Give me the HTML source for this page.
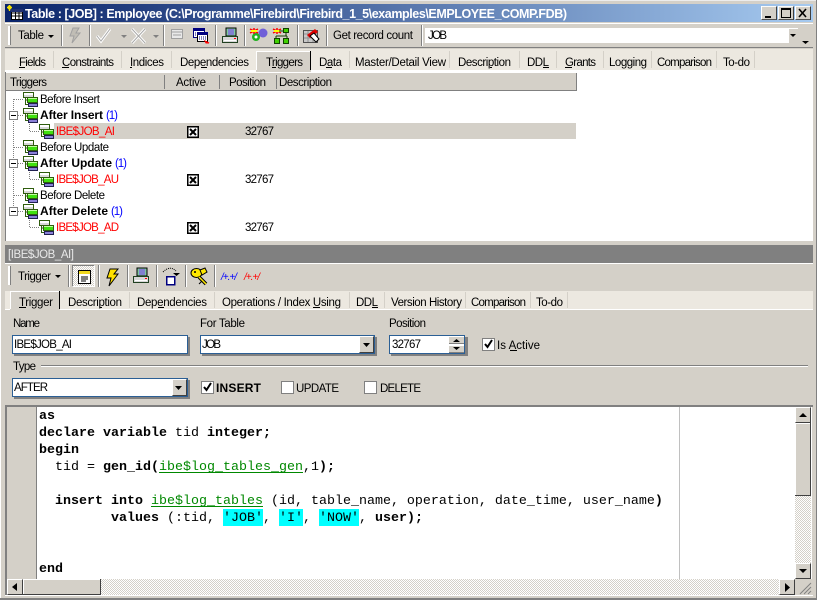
<!DOCTYPE html>
<html><head><meta charset="utf-8"><title>Table : [JOB] : Employee</title>
<style>
html,body{margin:0;padding:0;background:#d4d0c8;overflow:hidden}
svg{display:block}
text{font-family:"Liberation Sans",sans-serif;font-size:11.5px;fill:#000;white-space:pre}
.b{font-weight:bold;font-size:12px}
.r{fill:#f00}
.u{fill:#00f}
.c{font-family:"Liberation Mono",monospace;font-size:13.33px}
.c tspan.k{font-weight:bold}
rect,line{shape-rendering:crispEdges}
</style></head><body>
<svg width="817" height="600" viewBox="0 0 817 600" xmlns="http://www.w3.org/2000/svg">
<defs>
<linearGradient id="tb" x1="0" x2="1" y1="0" y2="0"><stop offset="0" stop-color="#0a246a"/><stop offset="1" stop-color="#a6caf0"/></linearGradient>
<pattern id="dit" width="2" height="2" patternUnits="userSpaceOnUse"><rect width="2" height="2" fill="#fff"/><rect width="1" height="1" fill="#d4d0c8"/><rect x="1" y="1" width="1" height="1" fill="#d4d0c8"/></pattern>
<g id="ti"><rect x="0.5" y="-6.5" width="10" height="5" fill="#d8d8d8" stroke="#2f5d0e"/><rect x="1" y="-6" width="9" height="2" fill="#fff"/><path d="M2.500-1.500V5.500H5" fill="none" stroke="#2f5d0e"/><path d="M2.500 1H4" stroke="#2f5d0e"/><rect x="4.500" y="-1.500" width="10" height="5" fill="#40e010" stroke="#2f5d0e"/><rect x="5" y="-1" width="9" height="1" fill="#c0ffa0"/><rect x="5.500" y="4.500" width="9" height="3" fill="#8a80d8" stroke="#20204f"/></g>
<g id="chk"><rect x="0.5" y="0.5" width="11" height="11" fill="#fff" stroke="#000" stroke-width="1"/><rect x="1" y="1" width="10" height="10" fill="none" stroke="#000"/><path d="M3 3L9 9M9 3L3 9" stroke="#000" stroke-width="2"/></g>
<g id="mn"><rect x="0.5" y="0.5" width="8" height="8" fill="#fff" stroke="#808080"/><rect x="2" y="4" width="5" height="1" fill="#000"/></g>
<g id="cb"><rect width="16" height="16" fill="#d4d0c8"/><path d="M0.5 15.500V.5H15.500" fill="none" stroke="#fff"/><path d="M.5 15.500H15.500V.5" fill="none" stroke="#404040"/></g>
</defs>

<!-- window -->
<rect width="817" height="600" fill="#d4d0c8"/>
<rect x="0" y="0" width="817" height="1" fill="#ececec"/>
<rect x="0" y="0" width="1" height="600" fill="#fff"/>
<rect x="816" y="0" width="1" height="600" fill="#808080"/>
<rect x="0" y="598" width="817" height="2" fill="#808080"/>
<!-- title -->
<rect x="5" y="4" width="808" height="18" fill="url(#tb)"/>
<g>
<rect x="11.500" y="9.500" width="11" height="10" fill="#fff" stroke="#000"/><path d="M12 13H22M12 16H22M15.500 10V19M19 10V19" stroke="#000"/>
<rect x="11" y="9" width="12" height="3" fill="#203070"/>
<path d="M8 6L11 9M11 6L8 9M7 7.500H12M9.500 5V11" stroke="#f0e000" stroke-width="1.300"/>
</g>
<text class="b" x="25" y="18" style="font-size:12.5px;fill:#fff" textLength="542">Table : [JOB] : Employee (C:\Programme\Firebird\Firebird_1_5\examples\EMPLOYEE_COMP.FDB)</text>
<g transform="translate(761,6)"><use href="#cb" transform="scale(1,.875)"/><rect x="4" y="10" width="6" height="2" fill="#000"/></g>
<g transform="translate(778,6)"><use href="#cb" transform="scale(1,.875)"/><rect x="3.500" y="2.500" width="9" height="9" fill="none" stroke="#000"/><rect x="3" y="2" width="10" height="2" fill="#000"/></g>
<g transform="translate(795,6)"><use href="#cb" transform="scale(1,.875)"/><path d="M4 3L11 11M11 3L4 11" stroke="#000" stroke-width="1.600"/></g>

<!-- toolbar 1 -->
<rect x="5" y="23" width="808" height="1" fill="#fff"/>
<rect x="5" y="47" width="808" height="1" fill="#808080"/>
<rect x="8" y="26" width="2" height="19" fill="#fff"/><rect x="10" y="26" width="1" height="19" fill="#808080"/>
<text x="18" y="39" textLength="26">Table</text><path d="M48 35h6l-3 3z" fill="#000"/>
<g fill="#808080">
<rect x="61" y="25" width="1" height="21"/><rect x="89" y="25" width="1" height="21"/><rect x="163" y="25" width="1" height="21"/><rect x="215" y="25" width="1" height="21"/><rect x="244" y="25" width="1" height="21"/><rect x="297" y="25" width="1" height="21"/><rect x="326" y="25" width="1" height="21"/><rect x="421" y="25" width="1" height="21"/>
</g>
<g fill="#fff">
<rect x="62" y="25" width="1" height="21"/><rect x="90" y="25" width="1" height="21"/><rect x="164" y="25" width="1" height="21"/><rect x="216" y="25" width="1" height="21"/><rect x="245" y="25" width="1" height="21"/><rect x="298" y="25" width="1" height="21"/><rect x="327" y="25" width="1" height="21"/><rect x="422" y="25" width="1" height="21"/>
</g>
<!-- disabled icons -->
<path d="M73 28L79 28L76 33L80 33L72 43L74 36L70 36Z" fill="#c0bdb5" stroke="#a0a0a0"/>
<path d="M97 36L101 41L110 29" fill="none" stroke="#fff" stroke-width="3"/><path d="M97 36L101 41L110 29" fill="none" stroke="#a8a8a8" stroke-width="1"/>
<path d="M121 35h6l-3 3z" fill="#808080"/>
<path d="M132 29L145 43M145 29L132 43" stroke="#fff" stroke-width="3"/><path d="M132 29L145 43M145 29L132 43" stroke="#a8a8a8"/>
<path d="M153 35h6l-3 3z" fill="#808080"/>
<rect x="171.500" y="29.500" width="11" height="9" fill="#e8e8e8" stroke="#a0a0a0"/><path d="M171 32H183M173 35H181" stroke="#a0a0a0"/>
<!-- calendar icon -->
<rect x="193.500" y="28.500" width="11" height="9" fill="#fff" stroke="#000080"/><rect x="193" y="28" width="12" height="3" fill="#000080"/><path d="M195 33H199M195 35H197" stroke="#000080" stroke-dasharray="1 1"/>
<rect x="197.500" y="32.500" width="10" height="9" fill="#fff" stroke="#000"/><rect x="197" y="32" width="11" height="3" fill="#000080"/><path d="M199 37H206M199 39H206" stroke="#000080" stroke-dasharray="1 1"/>
<path d="M205 41l4 2l-3 0z" fill="#f00" stroke="#f00"/>
<!-- printer -->
<rect x="226" y="28" width="10" height="8" fill="#7fc8a0" stroke="#000"/><rect x="228" y="29" width="6" height="6" fill="#8080d0"/>
<rect x="222.500" y="36.500" width="15" height="6" fill="#d8d8d8" stroke="#204020"/><rect x="224" y="40" width="12" height="1" fill="#fff"/><rect x="234" y="38" width="2" height="1" fill="#f00"/>
<!-- gears -->
<circle cx="263" cy="33" r="4.500" fill="#7060d8"/><circle cx="256" cy="37" r="4" fill="#20b020"/><circle cx="256" cy="37" r="1.500" fill="#fff"/>
<path d="M250 29L258 33M258 29L250 33M254 28V34" stroke="#f00" stroke-width="1.500"/><path d="M251 31H257" stroke="#ff0" stroke-width="2"/>
<path d="M273 29L281 33M281 29L273 33M277 28V34" stroke="#f00" stroke-width="1.500"/><path d="M274 31H280" stroke="#ff0" stroke-width="2"/>
<rect x="283.500" y="28.500" width="5" height="4" fill="#40d000" stroke="#104000"/><path d="M279 31H283M286 33V36M276 36H287M276 36V38M287 36V38" fill="none" stroke="#104000"/>
<rect x="274.500" y="38.500" width="5" height="5" fill="#40d000" stroke="#104000"/><rect x="283.500" y="38.500" width="5" height="5" fill="#40d000" stroke="#104000"/>
<!-- eraser icon -->
<rect x="303.500" y="30.500" width="14" height="12" fill="#c8c8c8" stroke="#505050"/><path d="M304 34H317M304 38H317M308 31V42M313 31V42" stroke="#909090"/>
<path d="M307 35L315 29L318 32L310 38Z" fill="#e00000"/><path d="M310 36L316 42L319 39L314 33Z" fill="#fff" stroke="#000"/>
<text x="333" y="39" textLength="80">Get record count</text>
<rect x="425" y="28" width="373" height="15" fill="#fff"/>
<text x="428" y="39" textLength="19">JOB</text>
<rect x="788" y="28" width="10" height="15" fill="#d4d0c8"/><rect x="788" y="28" width="10" height="1" fill="#fff"/><rect x="788" y="28" width="1" height="15" fill="#fff"/>
<path d="M790 34h6l-3 3z" fill="#000"/><path d="M802 41h7l-3.500 3z" fill="#000"/>

<!-- tabs 1 -->
<rect x="5" y="48" width="808" height="24" fill="#ece8e0"/>
<rect x="5" y="48" width="808" height="1" fill="#d4d0c8"/>
<rect x="5" y="70" width="808" height="2" fill="#fff"/>
<rect x="256" y="51" width="55" height="21" fill="#d4d0c8"/>
<rect x="256" y="51" width="55" height="1" fill="#fff"/><rect x="256" y="51" width="1" height="19" fill="#fff"/><rect x="310" y="51" width="1" height="19" fill="#000"/>
<g fill="#d4d0c8">
<rect x="53" y="51" width="1" height="17"/><rect x="121" y="51" width="1" height="17"/><rect x="171" y="51" width="1" height="17"/><rect x="349" y="51" width="1" height="17"/><rect x="449" y="51" width="1" height="17"/><rect x="519" y="51" width="1" height="17"/><rect x="556" y="51" width="1" height="17"/><rect x="603" y="51" width="1" height="17"/><rect x="651" y="51" width="1" height="17"/><rect x="716" y="51" width="1" height="17"/><rect x="754" y="51" width="1" height="17"/>
</g>
<text x="19" y="66" textLength="27">Fields</text><rect x="19" y="67" width="6" height="1"/>
<text x="62" y="66" textLength="52">Constraints</text><rect x="62" y="67" width="7" height="1"/>
<text x="130" y="66" textLength="34">Indices</text><rect x="130" y="67" width="2" height="1"/>
<text x="180" y="66" textLength="69">Dependencies</text><rect x="201" y="67" width="6" height="1"/>
<text x="266" y="66" textLength="37">Triggers</text><rect x="272" y="67" width="4" height="1"/>
<text x="319" y="66" textLength="23">Data</text><rect x="326" y="67" width="6" height="1"/>
<text x="355" y="66" textLength="91">Master/Detail View</text>
<text x="458" y="66" textLength="53">Description</text><rect x="490" y="67" width="2" height="1"/>
<text x="527" y="66" textLength="22">DDL</text><rect x="543" y="67" width="6" height="1"/>
<text x="565" y="66" textLength="31">Grants</text><rect x="565" y="67" width="7" height="1"/>
<text x="609" y="66" textLength="38">Logging</text>
<text x="657" y="66" textLength="55">Comparison</text>
<text x="723" y="66" textLength="27">To-do</text>

<!-- tree -->
<rect x="5" y="72" width="808" height="169" fill="#fff"/>
<rect x="5" y="72" width="1" height="169" fill="#808080"/>
<rect x="6" y="73" width="570" height="17" fill="#d4d0c8"/>
<rect x="6" y="90" width="571" height="1" fill="#808080"/><rect x="576" y="73" width="1" height="18" fill="#808080"/>
<rect x="164" y="75" width="1" height="14" fill="#808080"/><rect x="219" y="75" width="1" height="14" fill="#808080"/><rect x="276" y="75" width="1" height="14" fill="#808080"/>
<text x="10" y="86" textLength="37">Triggers</text>
<text x="176" y="86" textLength="30">Active</text>
<text x="229" y="86" textLength="37">Position</text>
<text x="279" y="86" textLength="53">Description</text>
<rect x="54" y="123" width="522" height="16" fill="#d4d0c8"/>
<path d="M13.500 99V211" stroke="#808080" stroke-dasharray="1 1"/>
<g stroke="#808080" stroke-dasharray="1 1" fill="none">
<path d="M14 99.500H23M14 115.500H23M14 147.500H23M14 163.500H23M14 195.500H23M14 211.500H23"/>
<path d="M29.500 122V131.500H39M29.500 170V179.500H39M29.500 218V227.500H39"/>
</g>
<use href="#mn" x="9" y="111"/><use href="#mn" x="9" y="159"/><use href="#mn" x="9" y="207"/>
<use href="#ti" x="23" y="99"/><use href="#ti" x="23" y="115"/><use href="#ti" x="39" y="131"/>
<use href="#ti" x="23" y="147"/><use href="#ti" x="23" y="163"/><use href="#ti" x="39" y="179"/>
<use href="#ti" x="23" y="195"/><use href="#ti" x="23" y="211"/><use href="#ti" x="39" y="227"/>
<text x="40" y="103" textLength="60">Before Insert</text>
<text class="b" x="40" y="119" textLength="63">After Insert</text><text class="u" x="106" y="119" textLength="12">(1)</text>
<text class="r" x="56" y="135" textLength="59">IBE$JOB_AI</text>
<text x="40" y="151" textLength="69">Before Update</text>
<text class="b" x="40" y="167" textLength="72">After Update</text><text class="u" x="115" y="167" textLength="12">(1)</text>
<text class="r" x="56" y="183" textLength="63">IBE$JOB_AU</text>
<text x="40" y="199" textLength="65">Before Delete</text>
<text class="b" x="40" y="215" textLength="68">After Delete</text><text class="u" x="111" y="215" textLength="12">(1)</text>
<text class="r" x="56" y="231" textLength="63">IBE$JOB_AD</text>
<use href="#chk" x="187" y="126"/><use href="#chk" x="187" y="174"/><use href="#chk" x="187" y="222"/>
<text x="245" y="135" textLength="29">32767</text><text x="245" y="183" textLength="29">32767</text><text x="245" y="231" textLength="29">32767</text>

<!-- panel header -->
<rect x="5" y="245" width="808" height="18" fill="#808080"/>
<text x="8" y="258" style="fill:#e8e8e8" textLength="66">[IBE$JOB_AI]</text>

<!-- toolbar 2 -->
<rect x="5" y="263" width="808" height="1" fill="#fff"/>
<rect x="8" y="266" width="2" height="19" fill="#fff"/><rect x="10" y="266" width="1" height="19" fill="#808080"/>
<text x="18" y="280" textLength="33">Trigger</text><path d="M55 275h6l-3 3z" fill="#000"/>
<g fill="#808080"><rect x="68" y="265" width="1" height="22"/><rect x="98" y="265" width="1" height="22"/><rect x="127" y="265" width="1" height="22"/><rect x="156" y="265" width="1" height="22"/><rect x="185" y="265" width="1" height="22"/><rect x="214" y="265" width="1" height="22"/></g>
<g fill="#fff"><rect x="69" y="265" width="1" height="22"/><rect x="99" y="265" width="1" height="22"/><rect x="128" y="265" width="1" height="22"/><rect x="157" y="265" width="1" height="22"/><rect x="186" y="265" width="1" height="22"/><rect x="215" y="265" width="1" height="22"/></g>
<!-- pressed button -->
<rect x="72" y="265" width="23" height="22" fill="url(#dit)"/><path d="M72.500 286.500V265.500H94.500" fill="none" stroke="#808080"/><path d="M72.500 286.500H94.500V265.500" fill="none" stroke="#fff"/>
<rect x="78.500" y="270.500" width="12" height="13" fill="#fff" stroke="#000"/><rect x="79" y="271" width="11" height="3" fill="#f0d820"/><path d="M81 277H88M81 279H88M81 281H86" stroke="#000"/>
<!-- lightning -->
<path d="M110 269L118 269L114 274L118 274L109 286L111 278L107 278Z" fill="#ffe000" stroke="#000"/>
<!-- printer 2 -->
<rect x="137" y="268" width="10" height="8" fill="#7fc8a0" stroke="#000"/><rect x="139" y="269" width="6" height="6" fill="#8080d0"/>
<rect x="133.500" y="276.500" width="15" height="6" fill="#d8d8d8" stroke="#204020"/><rect x="135" y="280" width="12" height="1" fill="#fff"/><rect x="145" y="278" width="2" height="1" fill="#f00"/>
<!-- step icon -->
<path d="M163 272Q170 265 176 271" fill="none" stroke="#000" stroke-dasharray="1 1"/><path d="M173 273h7l-3.500 3z" fill="#000"/>
<rect x="166.500" y="276.500" width="8" height="8" fill="#fff" stroke="#000080" stroke-width="1.500"/>
<!-- key icon -->
<ellipse cx="196.500" cy="273" rx="5.500" ry="4.500" fill="#ffe800" stroke="#000"/><circle cx="195" cy="272" r="1" fill="#000"/>
<path d="M200 270L205 268L207 272L202 275Z" fill="#ffe800" stroke="#000"/>
<path d="M199 277L206 284" stroke="#000" stroke-width="3.500"/><path d="M199 277L206 284" stroke="#ffe800" stroke-width="1.500"/><path d="M202 281L199 284" stroke="#000"/>
<text x="221" y="280" style="font-size:10px;font-style:italic;fill:#00f" textLength="16">/+.+/</text>
<text x="244" y="280" style="font-size:10px;font-style:italic;fill:#f00" textLength="16">/+.+/</text>

<!-- tabs 2 -->
<rect x="5" y="291" width="808" height="19" fill="#ece8e0"/>
<rect x="5" y="309" width="808" height="1" fill="#fff"/>
<rect x="10" y="291" width="50" height="19" fill="#d4d0c8"/>
<rect x="10" y="291" width="50" height="1" fill="#fff"/><rect x="10" y="291" width="1" height="18" fill="#fff"/><rect x="59" y="291" width="1" height="18" fill="#000"/>
<g fill="#d4d0c8"><rect x="129" y="292" width="1" height="16"/><rect x="214" y="292" width="1" height="16"/><rect x="349" y="292" width="1" height="16"/><rect x="384" y="292" width="1" height="16"/><rect x="465" y="292" width="1" height="16"/><rect x="530" y="292" width="1" height="16"/><rect x="567" y="292" width="1" height="16"/></g>
<text x="19" y="306" textLength="34">Trigger</text><rect x="19" y="307" width="7" height="1"/>
<text x="68" y="306" textLength="54">Description</text><rect x="100" y="307" width="2" height="1"/>
<text x="137" y="306" textLength="70">Dependencies</text><rect x="158" y="307" width="6" height="1"/>
<text x="222" y="306" textLength="119">Operations / Index Using</text><rect x="313" y="307" width="7" height="1"/>
<text x="356" y="306" textLength="22">DDL</text><rect x="372" y="307" width="6" height="1"/>
<text x="391" y="306" textLength="71">Version History</text>
<text x="471" y="306" textLength="55">Comparison</text>
<text x="536" y="306" textLength="27">To-do</text>

<!-- form -->
<text x="13" y="327" textLength="27">Name</text>
<text x="200" y="327" textLength="45">For Table</text>
<text x="389" y="327" textLength="37">Position</text>
<rect x="14" y="337" width="176" height="19" fill="#808080"/>
<rect x="12.500" y="335.500" width="175" height="18" fill="#fff" stroke="#2b5f95"/>
<text x="14" y="348" textLength="58">IBE$JOB_AI</text>
<rect x="202" y="337" width="175" height="19" fill="#808080"/>
<rect x="200.500" y="335.500" width="174" height="18" fill="#fff" stroke="#2b5f95"/>
<text x="202" y="348" textLength="19">JOB</text>
<rect x="359" y="336" width="15" height="17" fill="#d4d0c8"/><path d="M359.500 352.500V336.500H373.500" fill="none" stroke="#fff"/><path d="M359.500 352.500H373.500V336.500" fill="none" stroke="#404040"/><path d="M363 343h7l-3.500 4z" fill="#000"/>
<rect x="391" y="337" width="77" height="19" fill="#808080"/>
<rect x="389.500" y="335.500" width="75" height="18" fill="#fff" stroke="#2b5f95"/>
<text x="392" y="348" textLength="29">32767</text>
<rect x="449" y="336" width="15" height="8" fill="#d4d0c8"/><rect x="449" y="345" width="15" height="8" fill="#d4d0c8"/><rect x="449" y="343" width="15" height="1" fill="#808080"/><rect x="449" y="352" width="15" height="1" fill="#808080"/><rect x="449" y="336" width="15" height="1" fill="#fff"/><rect x="449" y="345" width="15" height="1" fill="#fff"/>
<path d="M453 342h7l-3.500-3z M453 347h7l-3.500 3z" fill="#000"/>
<rect x="482.500" y="338.500" width="12" height="12" fill="#fff" stroke="#808080"/><path d="M485 344L487.500 347L492 340" fill="none" stroke="#000" stroke-width="2"/>
<text x="497" y="349" textLength="43">Is Active</text><rect x="510" y="350" width="7" height="1"/>
<text x="13" y="370" textLength="23">Type</text>
<rect x="41" y="365" width="767" height="1" fill="#808080"/><rect x="41" y="366" width="767" height="1" fill="#fff"/>
<rect x="14" y="380" width="176" height="19" fill="#808080"/>
<rect x="12.500" y="378.500" width="175" height="18" fill="#fff" stroke="#2b5f95"/>
<text x="14" y="391" textLength="34">AFTER</text>
<rect x="172" y="379" width="15" height="17" fill="#d4d0c8"/><path d="M172.500 395.500V379.500H186.500" fill="none" stroke="#fff"/><path d="M172.500 395.500H186.500V379.500" fill="none" stroke="#404040"/><path d="M175 386h7l-3.500 4z" fill="#000"/>
<rect x="201.500" y="381.500" width="12" height="12" fill="#fff" stroke="#808080"/><path d="M204 387L206.500 390L211 383" fill="none" stroke="#000" stroke-width="2"/>
<text class="b" x="216" y="392" textLength="45">INSERT</text>
<rect x="281.500" y="381.500" width="12" height="12" fill="#fff" stroke="#808080"/>
<text x="296" y="392" textLength="43">UPDATE</text>
<rect x="364.500" y="381.500" width="12" height="12" fill="#fff" stroke="#808080"/>
<text x="380" y="392" textLength="41">DELETE</text>

<!-- editor -->
<rect x="5" y="405" width="808" height="2" fill="#808080"/><rect x="5" y="405" width="2" height="191" fill="#808080"/>
<rect x="7" y="407" width="805" height="188" fill="#fff"/>
<rect x="7" y="407" width="29" height="172" fill="#d4d0c8"/><rect x="36" y="407" width="1" height="172" fill="#808080"/>
<rect x="679" y="407" width="1" height="172" fill="#c0c0c0"/>
<rect x="223" y="509" width="40" height="17" fill="#0ff"/><rect x="279" y="509" width="24" height="17" fill="#0ff"/><rect x="319" y="509" width="40" height="17" fill="#0ff"/>
<text class="c" x="39" y="419"><tspan class="k">as</tspan></text>
<text class="c" x="39" y="436"><tspan class="k">declare variable</tspan> tid <tspan class="k">integer;</tspan></text>
<text class="c" x="39" y="453"><tspan class="k">begin</tspan></text>
<text class="c" x="55" y="470">tid = <tspan class="k">gen_id(</tspan><tspan style="fill:#080">ibe$log_tables_gen</tspan>,1<tspan class="k">);</tspan></text>
<text class="c" x="55" y="504"><tspan class="k">insert into</tspan> <tspan style="fill:#080">ibe$log_tables</tspan> (id, table_name, operation, date_time, user_name<tspan class="k">)</tspan></text>
<text class="c" x="111" y="521"><tspan class="k">values</tspan> (:tid, 'JOB', 'I', 'NOW', <tspan class="k">user);</tspan></text>
<text class="c" x="39" y="572"><tspan class="k">end</tspan></text>
<rect x="159" y="472" width="144" height="1" fill="#080"/><rect x="151" y="506" width="112" height="1" fill="#080"/>

<!-- v scrollbar -->
<rect x="795" y="407" width="16" height="172" fill="url(#dit)"/>
<use href="#cb" x="795" y="407"/><path d="M799 417h8l-4-4z" fill="#000"/>
<rect x="795.500" y="423.500" width="15" height="72" fill="#d4d0c8" stroke="#404040"/><path d="M795.500 495V423.500H810" fill="none" stroke="#fff"/>
<use href="#cb" x="795" y="563"/><path d="M799 569h8l-4 4z" fill="#000"/>
<!-- h scrollbar -->
<rect x="7" y="579" width="788" height="16" fill="url(#dit)"/>
<use href="#cb" x="7" y="579"/><path d="M17 583v8l-5-4z" fill="#000"/>
<rect x="23.500" y="579.500" width="77" height="15" fill="#d4d0c8" stroke="#404040"/><path d="M23.500 594V579.500H100" fill="none" stroke="#fff"/>
<use href="#cb" x="779" y="579"/><path d="M785 583v9l5-4.500z" fill="#000"/>
<rect x="795" y="579" width="17" height="16" fill="#d4d0c8"/>
<path d="M800 594L811 583M804 594L811 587M808 594L811 591" stroke="#808080"/>
<rect x="5" y="595" width="808" height="1" fill="#fff"/>
</svg>
</body></html>
